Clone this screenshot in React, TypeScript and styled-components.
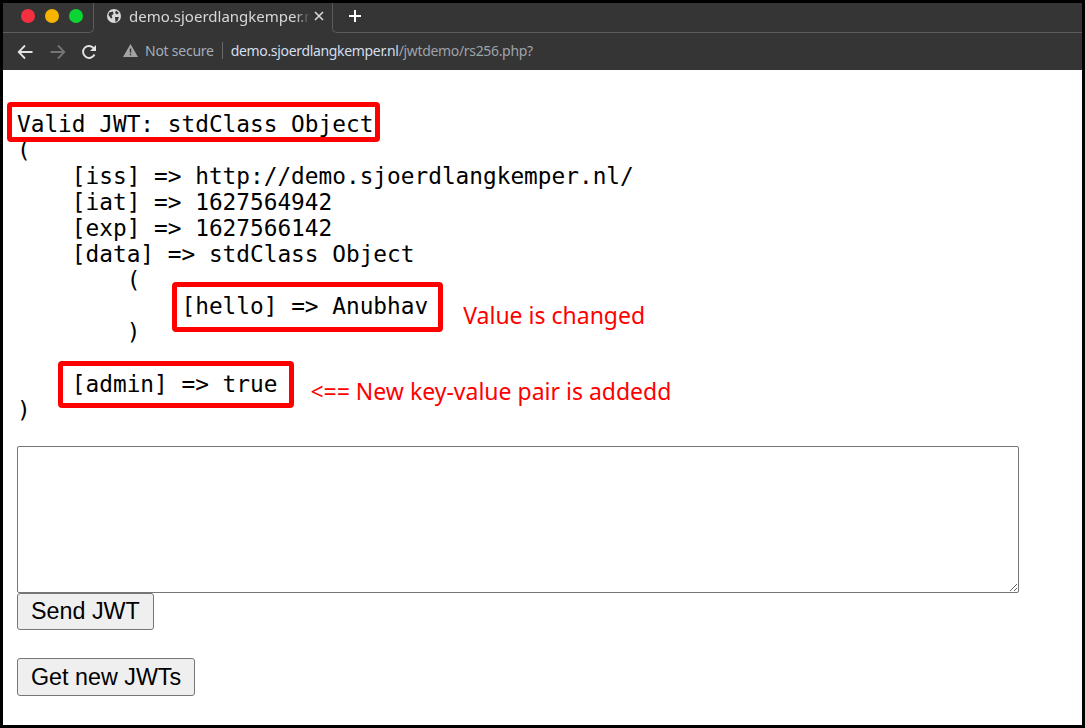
import React from "react";
import styled, { createGlobalStyle } from "styled-components";

const Global = createGlobalStyle`
  html, body { margin: 0; padding: 0; background: #000; }
`;

const Frame = styled.div`
  width: 1085px;
  height: 728px;
  box-sizing: border-box;
  border: 3px solid #000;
  display: flex;
  flex-direction: column;
  overflow: hidden;
  background: #fff;
`;

const TabBar = styled.div`
  height: 30px;
  background: #353535;
  display: flex;
  align-items: stretch;
  flex: none;
`;

const Lights = styled.div`
  display: flex;
  gap: 10px;
  align-items: center;
  padding: 0 0 3px 18px;
  width: 91px;
  box-sizing: border-box;
  border-bottom: 1px solid #5c5c5c;
  border-right: 1px solid #5c5c5c;
  border-bottom-right-radius: 5px;
`;

const Light = styled.span<{ $c: string }>`
  width: 14px;
  height: 14px;
  border-radius: 50%;
  background: ${(p) => p.$c};
`;

const Tab = styled.div`
  width: 238px;
  flex: none;
  display: flex;
  align-items: center;
  font: 15px "Noto Sans", sans-serif;
  color: #d8d8d8;
  padding: 0 10px 4px 12px;
  box-sizing: border-box;

  svg {
    flex: none;
  }
`;

const TabTitle = styled.span`
  flex: none;
  margin-left: 7px;
  white-space: nowrap;
  -webkit-mask-image: linear-gradient(to right, #000 90%, transparent 98%);
  mask-image: linear-gradient(to right, #000 90%, transparent 98%);
`;

const TabClose = styled.svg`
  margin-left: auto;
`;

const TabRest = styled.div`
  flex: 1;
  display: flex;
  align-items: center;
  box-sizing: border-box;
  padding: 0 0 3px 15px;
  border-bottom: 1px solid #5c5c5c;
  border-left: 1px solid #5c5c5c;
  border-bottom-left-radius: 5px;
`;

const Toolbar = styled.div`
  height: 37px;
  background: #353535;
  display: flex;
  align-items: center;
  flex: none;
  padding-left: 14px;
`;

const NavIcons = styled.div`
  display: flex;
  align-items: center;
  gap: 15px;
`;

const Omnibox = styled.div`
  display: flex;
  align-items: center;
  margin-left: 25px;
  padding-bottom: 2px;
  font: 14px "Noto Sans", sans-serif;
  letter-spacing: -0.25px;
  white-space: nowrap;
`;

const Insecure = styled.span`
  color: #a3adba;
  margin-left: 7px;
  padding-right: 8px;
  border-right: 1px solid #6a6a6a;
  line-height: 17px;
`;

const Host = styled.span`
  color: #d2dfee;
  margin-left: 8px;
  letter-spacing: -0.33px;
`;

const UrlPath = styled.span`
  color: #9ea3a9;
`;

const Page = styled.div`
  flex: 1;
  padding: 41px 0 0 14px;
`;

const Dump = styled.div`
  font: 22.78px/26px "DejaVu Sans Mono", monospace;
  color: #000;
`;

const Line = styled.div`
  height: 26px;
  white-space: pre;
`;

const Boxed = styled.span<{ $t: number; $r: number; $b: number; $l: number }>`
  display: inline-block;
  height: 26px;
  position: relative;

  &::after {
    content: "";
    position: absolute;
    top: ${(p) => p.$t}px;
    right: ${(p) => p.$r}px;
    bottom: ${(p) => p.$b}px;
    left: ${(p) => p.$l}px;
    border: 5px solid #f00;
    border-radius: 4px;
  }
`;

const Note = styled.span<{ $gap: number; $drop: number }>`
  position: relative;
  top: ${(p) => p.$drop}px;
  margin-left: ${(p) => p.$gap}px;
  font: 23px/0 "Noto Sans", sans-serif;
  color: #f00;
`;

const JwtInput = styled.textarea`
  display: block;
  width: 1002px;
  height: 147px;
  box-sizing: border-box;
  margin: 23px 0 0;
  border: 1px solid #767676;
  border-radius: 2px;
  background: #fff;
`;

const Btn = styled.button`
  display: block;
  height: 37px;
  box-sizing: border-box;
  padding: 0 13px;
  background: #efefef;
  border: 1px solid #767676;
  border-radius: 3px;
  font: 23.3px "Liberation Sans", sans-serif;
  color: #000;
`;

const SecondBtn = styled(Btn)`
  margin-top: 28px;
  height: 38px;
`;

export default function App() {
  return (
    <>
      <Global />
      <Frame>
        <TabBar>
          <Lights>
            <Light $c="#f5303f" />
            <Light $c="#f5b400" />
            <Light $c="#0bd433" />
          </Lights>
          <Tab>
            <svg width="16" height="16" viewBox="0 0 16 16">
              <circle cx="8" cy="8" r="7" fill="#d8d8d8" />
              <path d="M3 4.5 7 3.5 7.5 6 5.5 7.5 6.5 10 5 10.5 2.5 7ZM10 2.5l3 2.5-2 1.5-2-1.5ZM9 9h4l-1.5 4-2 1Z" fill="#353535" />
            </svg>
            <TabTitle>demo.sjoerdlangkemper.n</TabTitle>
            <TabClose width="10" height="10" viewBox="0 0 10 10">
              <path d="M1 1l8 8M9 1l-8 8" stroke="#d8d8d8" strokeWidth="1.6" />
            </TabClose>
          </Tab>
          <TabRest>
            <svg width="14" height="14" viewBox="0 0 14 14">
              <path d="M7 1v12M1 7h12" stroke="#fff" strokeWidth="2" />
            </svg>
          </TabRest>
        </TabBar>
        <Toolbar>
          <NavIcons>
            <svg width="17" height="16" viewBox="0 0 17 16" fill="none">
              <path d="M15.5 8H2M8 1.5 1.7 8 8 14.5" stroke="#e3e3e3" strokeWidth="1.8" />
            </svg>
            <svg width="17" height="16" viewBox="0 0 17 16" fill="none">
              <path d="M1.5 8H15M9 1.5 15.3 8 9 14.5" stroke="#757575" strokeWidth="1.8" />
            </svg>
            <svg width="17" height="16" viewBox="0 0 17 16" fill="none">
              <path d="M13.5 10.5A6 6 0 1 1 13 4.5" stroke="#e3e3e3" strokeWidth="1.9" />
              <path d="M15 1v6H9Z" fill="#e3e3e3" />
            </svg>
          </NavIcons>
          <Omnibox>
            <svg width="15" height="13" viewBox="0 0 15 13">
              <path fillRule="evenodd" d="M7.5 0 15 13H0ZM6.8 4.5v4.3h1.4V4.5ZM6.8 9.8v1.4h1.4V9.8Z" fill="#a3a3a3" />
            </svg>
            <Insecure>Not secure</Insecure>
            <Host>
              demo.sjoerdlangkemper.nl<UrlPath>/jwtdemo/rs256.php?</UrlPath>
            </Host>
          </Omnibox>
        </Toolbar>
        <Page>
          <Dump>
            <Line>
              <Boxed $t={-9} $r={-7} $b={-5} $l={-10}>Valid JWT: stdClass Object</Boxed>
            </Line>
            <Line>(</Line>
            <Line>{"    [iss] => http://demo.sjoerdlangkemper.nl/"}</Line>
            <Line>{"    [iat] => 1627564942"}</Line>
            <Line>{"    [exp] => 1627566142"}</Line>
            <Line>{"    [data] => stdClass Object"}</Line>
            <Line>{"        ("}</Line>
            <Line>
              {"            "}
              <Boxed $t={-11} $r={-15} $b={-13} $l={-9}>[hello] =&gt; Anubhav</Boxed>
              <Note $gap={35} $drop={10}>Value is changed</Note>
            </Line>
            <Line>{"        )"}</Line>
            <Line />
            <Line>
              {"    "}
              <Boxed $t={-10} $r={-17} $b={-11} $l={-14}>[admin] =&gt; true</Boxed>
              <Note $gap={33} $drop={8}>&lt;== New key-value pair is addedd</Note>
            </Line>
            <Line>)</Line>
          </Dump>
          <JwtInput />
          <Btn>Send JWT</Btn>
          <SecondBtn>Get new JWTs</SecondBtn>
        </Page>
      </Frame>
    </>
  );
}
